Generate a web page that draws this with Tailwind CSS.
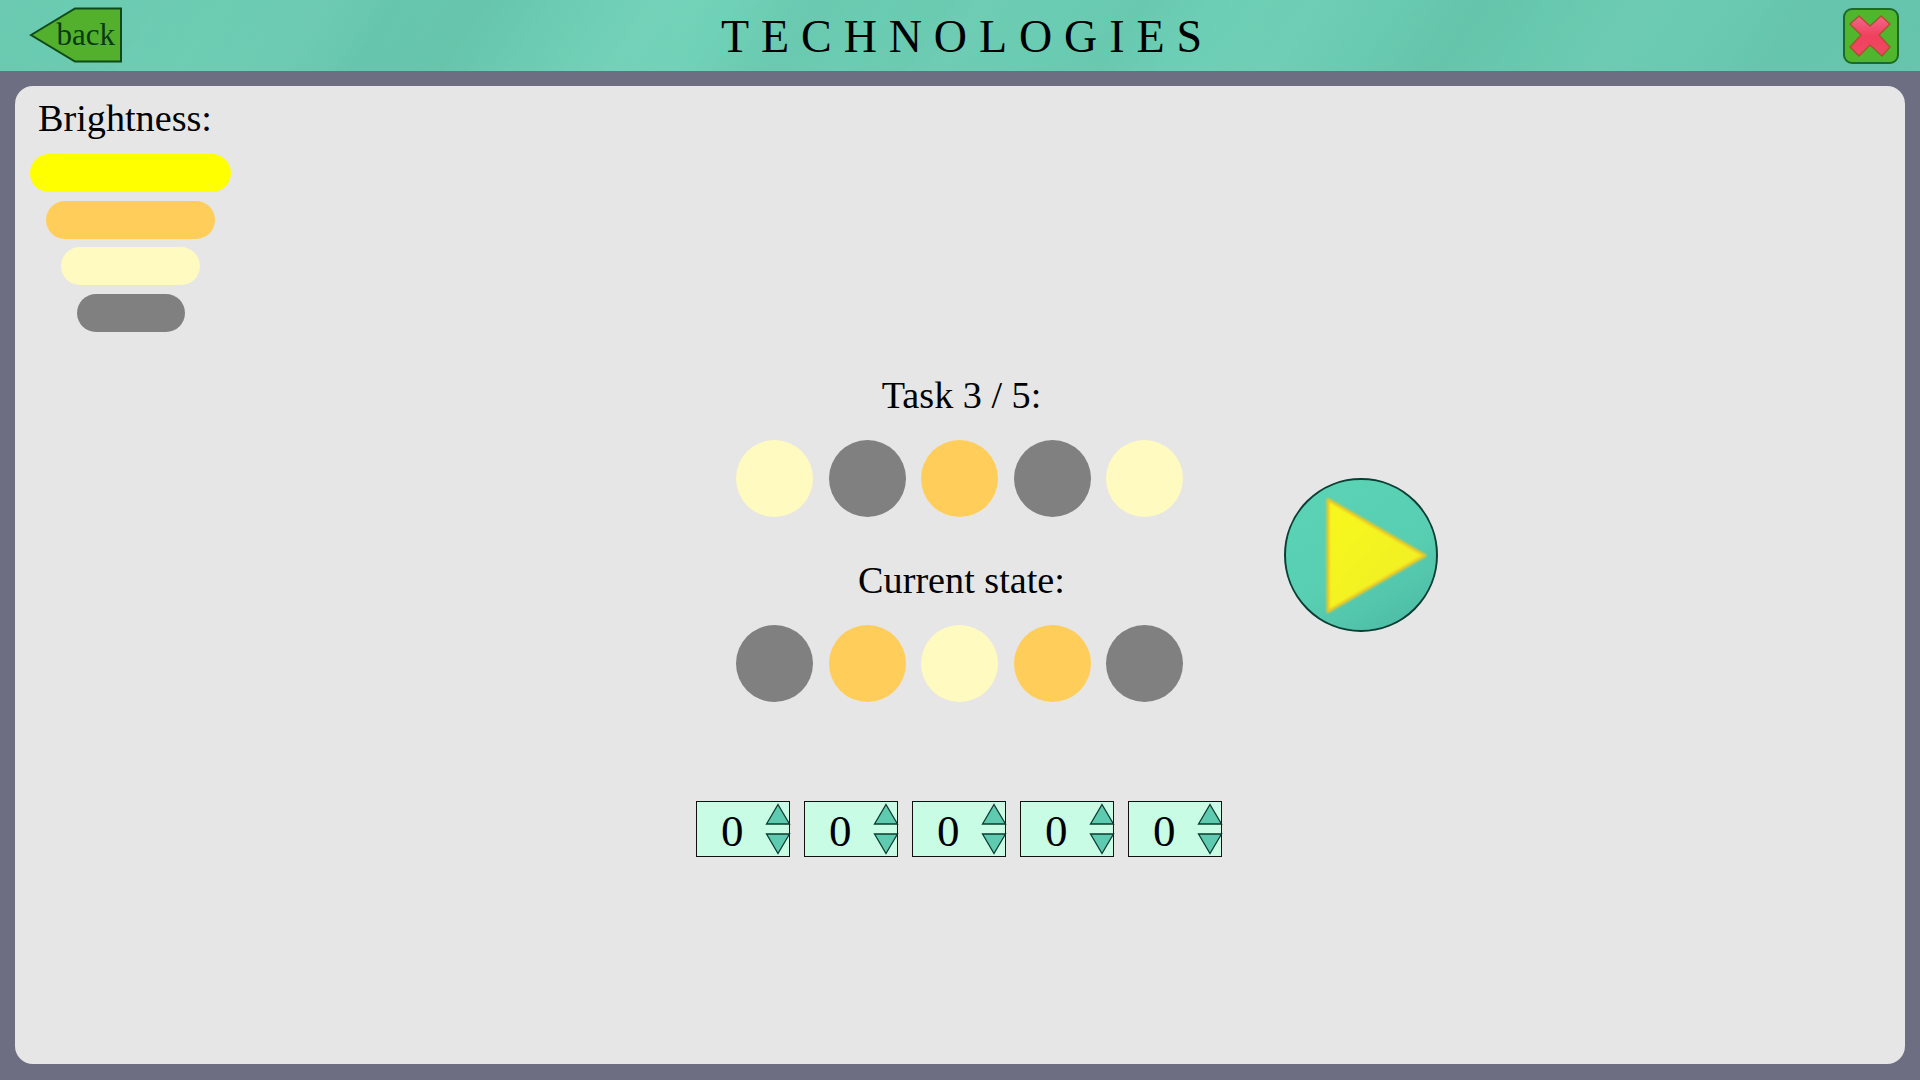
<!DOCTYPE html>
<html lang="en">
<head>
<meta charset="utf-8">
<title>Technologies</title>
<script src="https://cdn.jsdelivr.net/npm/@tailwindcss/browser@4"></script>
</head>
<body class="m-0 overflow-hidden">
<div class="w-[1920px] h-[1080px] flex flex-col bg-[#6e6e82] font-['Liberation_Serif',serif] text-black">
  <header class="h-[71px] shrink-0 flex items-center justify-between pl-[29px] pr-[21px] bg-[repeating-linear-gradient(125deg,rgba(255,255,255,0.035)_0px,rgba(255,255,255,0)_60px,rgba(0,0,0,0.025)_130px,rgba(255,255,255,0)_190px,rgba(255,255,255,0.035)_270px),linear-gradient(115deg,#66c8ae_0%,#6fd0b6_8%,#66c6ad_20%,#70d2b8_36%,#68cab0_48%,#6ccfb5_62%,#66c8ae_78%,#6acbb2_90%,#62c2aa_100%)]">
    <div class="relative w-[94px] h-[56px] mb-[2px] flex items-center justify-end pr-[8px]">
      <svg class="absolute inset-0" width="94" height="56" viewBox="0 0 94 56"><polygon points="2,28 46,1.5 92,1.5 92,54.5 46,54.5" fill="#52b02c" stroke="#0d4a18" stroke-width="2"/></svg>
      <span class="relative text-[31px] leading-none text-[#0a3a14] mb-[1px]">back</span>
    </div>
    <h1 class="text-[46px] leading-none font-normal tracking-[11.9px] ml-[-31px] mt-[2px] text-black">TECHNOLOGIES</h1>
    <div class="w-[56px] h-[56px] rounded-[9px] border-2 border-[#1c6a28] bg-[#4fb62e] flex items-center justify-center">
      <svg width="50" height="50" viewBox="3 3 50 50"><defs><linearGradient id="x" x1="0" y1="0" x2="0" y2="1"><stop offset="0" stop-color="#f2688a"/><stop offset="0.5" stop-color="#f0405e"/><stop offset="1" stop-color="#ee4a64"/></linearGradient></defs><polygon points="7,16 16,8 27,18 38,8 47,16 36,27 47,39 39,48 27,37 16,48 7,39 18,27" fill="url(#x)" stroke="#a8552e" stroke-width="1.5" stroke-linejoin="round"/></svg>
    </div>
  </header>
  <main class="flex-1 px-[15px] pt-[15px] pb-[16px]">
    <div class="h-full rounded-[18px] bg-[#e6e6e6] flex items-start pl-[15px]">
      <section class="w-[201px] shrink-0 flex flex-col items-center">
        <div class="self-start pl-[8px] pt-[10px] text-[38.2px] leading-[44px] h-[68px]">Brightness:</div>
        <div class="w-[201px] h-[38px] rounded-full bg-[#ffff00]"></div>
        <div class="w-[169px] h-[38px] rounded-full bg-[#ffcd5a] mt-[8.5px]"></div>
        <div class="w-[139px] h-[38px] rounded-full bg-[#fffac0] mt-[8.5px]"></div>
        <div class="w-[108px] h-[38px] rounded-full bg-[#808080] mt-[8.5px]"></div>
      </section>
      <section class="w-[530px] shrink-0 ml-[465px] mt-[287px] flex flex-col items-center">
        <div class="text-[38.2px] leading-[44px] h-[44px] ml-[1px]">Task 3 / 5:</div>
        <div class="flex gap-[15.5px] mt-[23px] mr-[3px]">
          <div class="w-[77px] h-[77px] rounded-full bg-[#fffac0]"></div>
          <div class="w-[77px] h-[77px] rounded-full bg-[#808080]"></div>
          <div class="w-[77px] h-[77px] rounded-full bg-[#ffcd5a]"></div>
          <div class="w-[77px] h-[77px] rounded-full bg-[#808080]"></div>
          <div class="w-[77px] h-[77px] rounded-full bg-[#fffac0]"></div>
        </div>
        <div class="text-[38.2px] leading-[44px] h-[44px] mt-[41px] ml-[1px]">Current state:</div>
        <div class="flex gap-[15.5px] mt-[23px] mr-[3px]">
          <div class="w-[77px] h-[77px] rounded-full bg-[#808080]"></div>
          <div class="w-[77px] h-[77px] rounded-full bg-[#ffcd5a]"></div>
          <div class="w-[77px] h-[77px] rounded-full bg-[#fffac0]"></div>
          <div class="w-[77px] h-[77px] rounded-full bg-[#ffcd5a]"></div>
          <div class="w-[77px] h-[77px] rounded-full bg-[#808080]"></div>
        </div>
        <div class="self-start flex gap-[14px] mt-[99px]">
          <div class="w-[94px] h-[56px] border-[1.5px] border-[#111] bg-[#c8fce4] flex items-center justify-between pl-[24px] text-[45px] leading-none"><span class="pt-[4px]">0</span><svg class="mr-[-2px]" width="26" height="54" viewBox="0 0 26 54"><polygon points="13,2.5 24.5,22 1.5,22" fill="#5ecbb0" stroke="#0c3a2e" stroke-width="1.3"/><polygon points="13,51.5 24.5,32 1.5,32" fill="#5ecbb0" stroke="#0c3a2e" stroke-width="1.3"/></svg></div>
          <div class="w-[94px] h-[56px] border-[1.5px] border-[#111] bg-[#c8fce4] flex items-center justify-between pl-[24px] text-[45px] leading-none"><span class="pt-[4px]">0</span><svg class="mr-[-2px]" width="26" height="54" viewBox="0 0 26 54"><polygon points="13,2.5 24.5,22 1.5,22" fill="#5ecbb0" stroke="#0c3a2e" stroke-width="1.3"/><polygon points="13,51.5 24.5,32 1.5,32" fill="#5ecbb0" stroke="#0c3a2e" stroke-width="1.3"/></svg></div>
          <div class="w-[94px] h-[56px] border-[1.5px] border-[#111] bg-[#c8fce4] flex items-center justify-between pl-[24px] text-[45px] leading-none"><span class="pt-[4px]">0</span><svg class="mr-[-2px]" width="26" height="54" viewBox="0 0 26 54"><polygon points="13,2.5 24.5,22 1.5,22" fill="#5ecbb0" stroke="#0c3a2e" stroke-width="1.3"/><polygon points="13,51.5 24.5,32 1.5,32" fill="#5ecbb0" stroke="#0c3a2e" stroke-width="1.3"/></svg></div>
          <div class="w-[94px] h-[56px] border-[1.5px] border-[#111] bg-[#c8fce4] flex items-center justify-between pl-[24px] text-[45px] leading-none"><span class="pt-[4px]">0</span><svg class="mr-[-2px]" width="26" height="54" viewBox="0 0 26 54"><polygon points="13,2.5 24.5,22 1.5,22" fill="#5ecbb0" stroke="#0c3a2e" stroke-width="1.3"/><polygon points="13,51.5 24.5,32 1.5,32" fill="#5ecbb0" stroke="#0c3a2e" stroke-width="1.3"/></svg></div>
          <div class="w-[94px] h-[56px] border-[1.5px] border-[#111] bg-[#c8fce4] flex items-center justify-between pl-[24px] text-[45px] leading-none"><span class="pt-[4px]">0</span><svg class="mr-[-2px]" width="26" height="54" viewBox="0 0 26 54"><polygon points="13,2.5 24.5,22 1.5,22" fill="#5ecbb0" stroke="#0c3a2e" stroke-width="1.3"/><polygon points="13,51.5 24.5,32 1.5,32" fill="#5ecbb0" stroke="#0c3a2e" stroke-width="1.3"/></svg></div>
        </div>
      </section>
      <div class="w-[154px] h-[154px] shrink-0 ml-[58px] mt-[392px] rounded-full border-2 border-[#0c3f34] bg-[linear-gradient(150deg,#5bd3b5_0%,#58cfb2_55%,#4cb9a4_100%)] flex items-center justify-center">
        <svg class="blur-[1px]" width="150" height="150" viewBox="0 0 150 150"><defs><linearGradient id="p" x1="0" y1="0" x2="1" y2="1"><stop offset="0" stop-color="#f8f81c"/><stop offset="1" stop-color="#eeee28"/></linearGradient></defs><polygon points="42,19.5 139,75.5 42,131.5" fill="url(#p)" stroke="#eec722" stroke-width="3" stroke-linejoin="round"/></svg>
      </div>
    </div>
  </main>
</div>
</body>
</html>
